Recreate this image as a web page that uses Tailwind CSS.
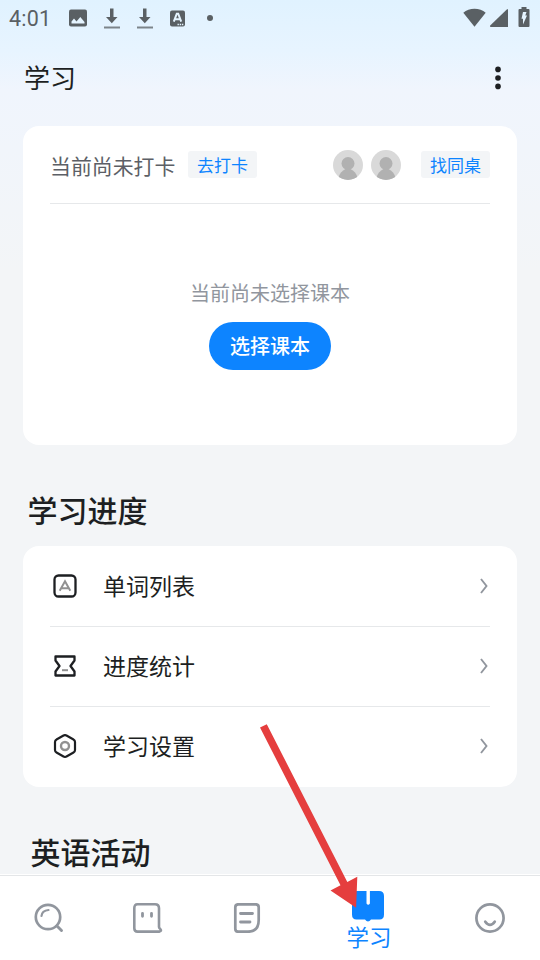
<!DOCTYPE html>
<html lang="zh-CN">
<head>
<meta charset="utf-8">
<title>学习</title>
<script src="https://cdn.jsdelivr.net/npm/@tailwindcss/browser@4"></script>
</head>
<body class="overflow-hidden">
<div class="relative flex h-[960px] w-[540px] flex-col overflow-hidden bg-[#f3f5f7] font-['Noto_Sans_CJK_SC',sans-serif] text-[#1d1f22]">
  <div class="flex min-h-0 flex-1 flex-col overflow-hidden bg-[linear-gradient(180deg,#e0f2ff_0px,#e7f4ff_50px,#f0f5fd_90px,#f3f5f7_270px)]">
    <!-- Status bar -->
    <header class="flex h-9 shrink-0 items-center pr-[10px] pl-[9px] text-[#5a6064]">
      <span class="w-[60px] font-[Roboto,sans-serif] text-[21.5px] leading-9 tracking-[0.2px] pt-[2px]">4:01</span>
      <svg class="h-[18px] w-[18px]" viewBox="0 0 18 18"><rect width="18" height="17" y=".5" rx="2" fill="currentColor"/><path d="M2.5 14.5v-2l2.5-3 2.5 3L11.3 8l4.2 5v1.5z" fill="#e5f4ff"/></svg>
      <svg class="ml-4 h-[22px] w-[18px]" viewBox="0 0 18 22"><path d="M7 1.5h3.5V10h4L8.8 16.2 3 10h4z" fill="currentColor"/><path d="M1 20.5h16" stroke="currentColor" stroke-width="2" opacity=".75"/></svg>
      <svg class="ml-[15px] h-[22px] w-[18px]" viewBox="0 0 18 22"><path d="M7 1.5h3.5V10h4L8.8 16.2 3 10h4z" fill="currentColor"/><path d="M1 20.5h16" stroke="currentColor" stroke-width="2" opacity=".75"/></svg>
      <svg class="ml-4 h-[17px] w-[15px]" viewBox="0 0 15 17"><rect width="15" height="16" y=".5" rx="2" fill="currentColor"/><path d="m3.8 11.7 3-8h1.4l3 8M5.2 9.2h4.6" fill="none" stroke="#e5f4ff" stroke-width="2"/><path d="M7.5 14.5h6" stroke="#e5f4ff" stroke-width="1.4" stroke-dasharray="1.4 .8"/></svg>
      <span class="ml-[22px] size-[6px] rounded-full bg-[#5a6064]"></span>
      <svg class="mb-[2px] ml-auto h-[19px] w-[23px]" viewBox="0 0 23 19"><path d="M.3 4.7C6-.5 17-.5 22.7 4.700L11.500 18.700z" fill="currentColor"/></svg>
      <svg class="ml-[3px] h-[18px] w-[19px]" viewBox="0 0 19 18"><path d="M19 0v18H1.500q-1-.5-.3-1.400L17.500.7z" fill="currentColor"/></svg>
      <svg class="mb-[2px] ml-[10px] h-[20px] w-[12px]" viewBox="0 0 12 20"><path d="M3.500 0h5v2h2q1 0 1 1v16q0 1-1 1h-9q-1 0-1-1V3q0-1 1-1h2z" fill="currentColor"/><path d="M5 5h3.500L7.300 8.500H9L5 17.500v-5.700H3.500z" fill="#e5f4ff"/></svg>
    </header>
    <!-- Title -->
    <div class="flex h-[90px] shrink-0 items-start justify-between pt-[22px] pr-[38px] pl-6">
      <h1 class="text-[26px] leading-[38px]">学习</h1>
      <svg class="mt-[8px] h-6 w-2" viewBox="0 0 8 24" fill="#1d1f22"><circle cx="4" cy="3.400" r="2.800"/><circle cx="4" cy="12" r="2.800"/><circle cx="4" cy="20.400" r="2.800"/></svg>
    </div>
    <!-- Check-in card -->
    <section class="mx-[23px] h-[319px] shrink-0 rounded-2xl bg-white px-[27px]">
      <div class="flex h-[78px] items-center border-b border-[#e6e8ea]">
        <span class="w-[125px] pt-[2px] text-[20.9px] whitespace-nowrap text-[#5c5f66]">当前尚未打卡</span>
        <span class="ml-[13px] h-[27px] w-[69px] rounded-[3px] bg-[#f3f5f7] text-center text-[17px] leading-[27px] text-[#0d84ff]">去打卡</span>
        <svg class="ml-auto size-[30px] rounded-full" viewBox="0 0 30 30"><path d="M0 0h30v30H0z" fill="#d9d9d9"/><circle cx="15" cy="13.500" r="6.500" fill="#b1b1b1"/><path d="M5.500 27q2-5.500 7-8h5q5 2.500 7 8v3h-19z" fill="#b1b1b1"/></svg>
        <svg class="ml-2 size-[30px] rounded-full" viewBox="0 0 30 30"><path d="M0 0h30v30H0z" fill="#d9d9d9"/><circle cx="15" cy="13.500" r="6.500" fill="#b1b1b1"/><path d="M5.500 27q2-5.500 7-8h5q5 2.500 7 8v3h-19z" fill="#b1b1b1"/></svg>
        <span class="ml-5 h-[27px] w-[69px] rounded-[3px] bg-[#f3f5f7] text-center text-[17px] leading-[27px] text-[#0d84ff]">找同桌</span>
      </div>
      <div class="flex flex-col items-center pt-[74px]">
        <p class="text-[20px] leading-[30px] text-[#91969e]">当前尚未选择课本</p>
        <button class="mt-[14px] h-12 w-[122px] rounded-full bg-[#0d84ff] text-[20px] leading-[48px] font-medium text-white">选择课本</button>
      </div>
    </section>
    <h2 class="mt-[42px] ml-[27.500px] shrink-0 text-[30px] leading-[44px] font-medium">学习进度</h2>
    <!-- Progress list -->
    <ul class="mx-[23px] mt-[15px] h-[241px] shrink-0 rounded-2xl bg-white px-[27px]">
      <li class="flex h-[81px] items-center border-b border-[#e6e8ea]">
        <svg class="ml-[3px] size-6" viewBox="0 0 24 24" fill="none"><rect x="1.500" y="1.500" width="21" height="21" rx="4" stroke="#1d1f22" stroke-width="2.300"/><path d="m6.700 16.700 5.300-9.400 5.300 9.400M8.800 14.200h6.400" stroke="#919191" stroke-width="2"/></svg>
        <span class="mb-[2px] ml-[26px] text-[23px]">单词列表</span>
        <svg class="mr-[2px] ml-auto h-4 w-2" viewBox="0 0 8 16"><path d="m1 1 5.500 7L1 15" fill="none" stroke="#91969e" stroke-width="1.900"/></svg>
      </li>
      <li class="flex h-20 items-center border-b border-[#e6e8ea] pb-px">
        <svg class="ml-[3px] size-6" viewBox="0 0 24 24" fill="none"><path d="M2.500 2.500h19v4L17.500 12l4 5.500v4h-19v-4L6.500 12l-4-5.500z" stroke="#1d1f22" stroke-width="2.300" stroke-linejoin="round"/><path d="M9 16.200h6" stroke="#919191" stroke-width="2"/></svg>
        <span class="mb-[2px] ml-[26px] text-[23px]">进度统计</span>
        <svg class="mr-[2px] ml-auto h-4 w-2" viewBox="0 0 8 16"><path d="m1 1 5.500 7L1 15" fill="none" stroke="#91969e" stroke-width="1.900"/></svg>
      </li>
      <li class="flex h-[78px] items-center">
        <svg class="ml-[3px] size-6" viewBox="0 0 24 24" fill="none"><path d="M10.500 1.500q1.500-.8 3 0l7 4q1.500.8 1.500 2.500v8q0 1.700-1.500 2.500l-7 4q-1.500.8-3 0l-7-4Q2 17.700 2 16V8q0-1.700 1.500-2.500z" stroke="#1d1f22" stroke-width="2.200"/><circle cx="12" cy="12" r="4" stroke="#919191" stroke-width="2.400"/></svg>
        <span class="mb-[2px] ml-[26px] text-[23px]">学习设置</span>
        <svg class="mr-[2px] ml-auto h-4 w-2" viewBox="0 0 8 16"><path d="m1 1 5.500 7L1 15" fill="none" stroke="#91969e" stroke-width="1.900"/></svg>
      </li>
    </ul>
    <h2 class="mt-[42px] ml-[30.500px] shrink-0 text-[30px] leading-[44px] font-medium">英语活动</h2>
  </div>
  <!-- Tab bar -->
  <nav class="grid h-[86px] shrink-0 grid-cols-[98px_100px_98px_144px_100px] items-center justify-items-center border-t border-white bg-white shadow-[inset_0_1px_0_#e4e6e8] text-[#91969e]">
    <svg class="size-[30px]" viewBox="0 0 30 30" fill="none" stroke="currentColor" stroke-linecap="round"><circle cx="14" cy="14" r="12.200" stroke-width="2.700"/><path d="M7.500 13q.5-5.500 7-6" stroke-width="2.200"/><path d="m23 23 4.500 4.500" stroke-width="2.900"/></svg>
    <svg class="size-[30px]" viewBox="0 0 30 30" fill="none" stroke="currentColor" stroke-linecap="round"><path d="M4.500 1.300H22q4 0 4 4V24q0 1 1.300 2.100 1.700 1.900-.8 2.500h-22q-3.200 0-3.200-3.300v-20q0-4 3.200-4z" stroke-width="2.600"/><path d="M9.500 10.300v3M18.500 10.300v3" stroke-width="2.800"/></svg>
    <svg class="size-[30px]" viewBox="0 0 30 30" fill="none" stroke="currentColor" stroke-linecap="round"><path d="M6.300 1.300h17.400q3 0 3 3V17q0 11.700-10.700 11.700H6.300q-3 0-3-3V4.300q0-3 3-3z" stroke-width="2.700"/><path d="M8.500 10.500h12M8.500 19H18" stroke-width="2.800"/></svg>
    <div class="flex flex-col items-center pt-[6px] text-[#0d84ff]">
      <svg class="h-[31px] w-8" viewBox="0 0 32 31"><path d="M5 0h9.500v12.500q1.700 2.500 3.400 0V0H27q5 0 5 5v18.500q0 5-4.500 5H19q-1.500 2-3 2t-3-2H4.500Q0 28.500 0 23.500V5q0-5 5-5z" fill="currentColor"/></svg>
      <span class="ml-[2px] text-[22.500px] leading-[28px]">学习</span>
    </div>
    <svg class="size-[30px]" viewBox="0 0 30 30" fill="none" stroke="currentColor" stroke-linecap="round"><circle cx="15" cy="15" r="13.600" stroke-width="2.700"/><path d="M10.300 18.700q4.700 6.500 9.400 0" stroke-width="2.800"/></svg>
  </nav>
  <!-- Pointer arrow -->
  <svg class="pointer-events-none absolute top-[720px] left-[250px] h-[200px] w-[120px]" viewBox="0 0 120 200"><path d="M10 7.500 16.800 4.300 97.300 162l10-5.300-1.200 31L80.500 170.500l10-5.300z" fill="#e53e3e"/></svg>
</div>
</body>
</html>
